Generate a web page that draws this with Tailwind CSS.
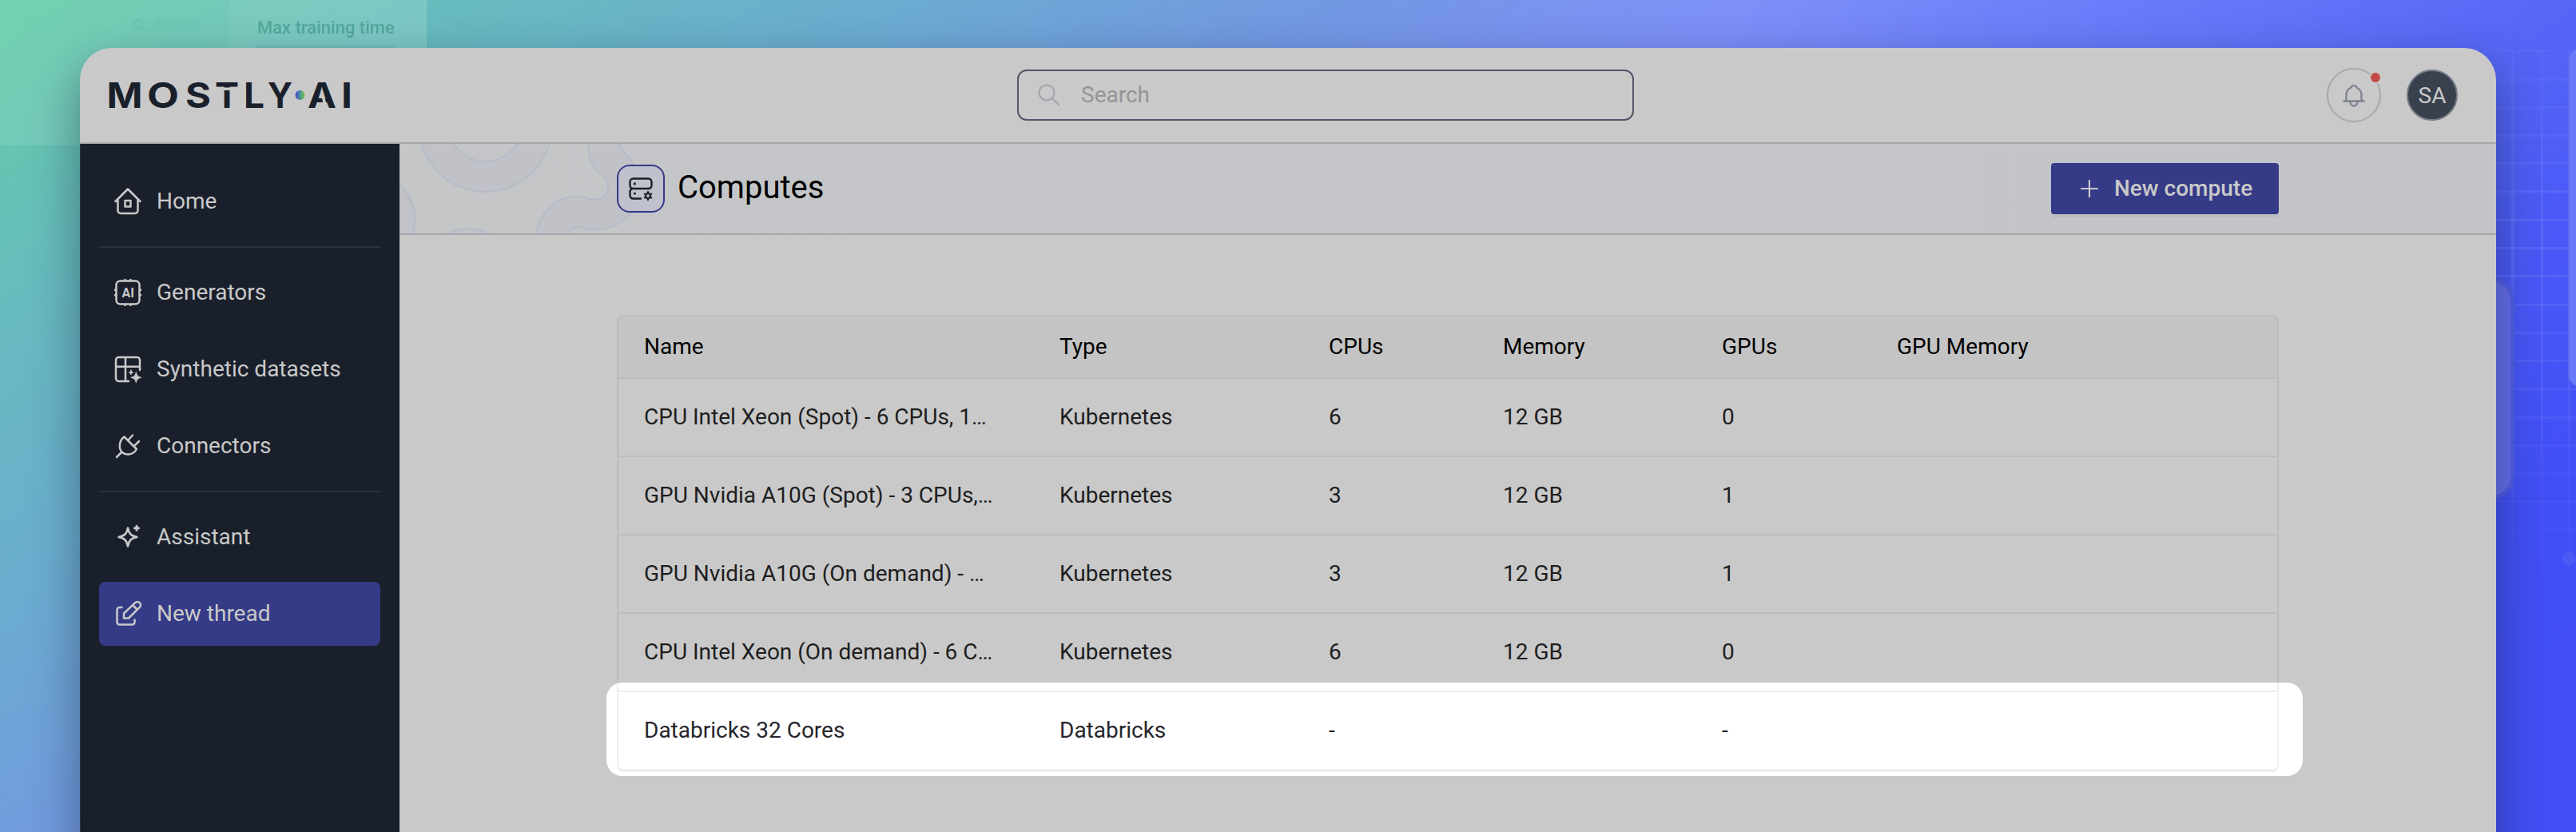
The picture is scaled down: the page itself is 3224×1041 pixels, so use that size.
<!DOCTYPE html>
<html lang="en">
<head>
<meta charset="utf-8">
<title>Computes</title>
<script src="https://cdn.jsdelivr.net/npm/@tailwindcss/browser@4"></script>
</head>
<body class="overflow-hidden">
<div class="relative isolate h-[1041px] w-[3224px] overflow-hidden bg-[linear-gradient(145.7deg,#64cda5_0px,#67bcbd_304px,#6bacd0_630px,#7298e2_940px,#7e8ff8_1240px,#6b7df9_1475px,#5566f6_1830px,#4b5af7_2020px,#414ff6_2297px,#434ff6_2675px)] pt-[60px] pl-[100px] font-[Roboto,sans-serif] text-[28px] leading-[33px] text-[#1e1e20]">

  <!-- Backdrop decoration -->
  <div class="absolute top-0 left-0 -z-10 h-[182px] w-[534px] bg-[#b0e8d8]/20"></div>
  <div class="absolute top-0 left-[287px] -z-10 h-[182px] w-[247px] rounded-t border-x-2 border-[#7ccbc0]/60 bg-white/5"></div>
  <div class="absolute top-[22px] left-[30px] -z-10 h-[14px] w-[50px] rounded bg-[#68cfb0]/20 blur-[2px]"></div>
  <div class="absolute top-[22px] left-[194px] -z-10 h-[14px] w-[58px] rounded bg-[#5fc4ae]/30 blur-[2px]"></div>
  <svg class="absolute top-[21px] left-[166px] -z-10" width="18" height="17" fill="none" stroke="#66c4ae" stroke-width="1.5"><path d="M2 15V3M2 8l6-5 7 6M4 15h12M6 11v2M11 10v4"/></svg>
  <div class="absolute top-[22px] left-[322px] -z-10 text-[22px] leading-[26px] font-medium whitespace-nowrap text-[#53a99c] blur-[0.6px]">Max training time</div>
  <div class="absolute top-[57px] left-[322px] -z-10 h-2 w-[173px] bg-[#5eb2a6]/40 blur-[1px]"></div>

  <svg class="absolute top-0 left-[3110px] -z-10" width="114" height="1041" fill="none">
    <defs>
      <linearGradient id="fade" x1="0" y1="0" x2="0" y2="760" gradientUnits="userSpaceOnUse">
        <stop offset="0.08" stop-color="#7c8cff" stop-opacity="0.1"/>
        <stop offset="0.4" stop-color="#7c8cff" stop-opacity="0.27"/>
        <stop offset="1" stop-color="#7c8cff" stop-opacity="0"/>
      </linearGradient>
    </defs>
    <g fill="url(#fade)">
      <path d="M33 63h4v690h-4zM70 63h3v690h-3zM104 63h3v690h-3z"/>
      <path d="M0 62h114v3H0zM0 98h114v3H0zM0 133h114v3H0zM0 168h114v3H0zM0 203h114v3H0zM0 238h114v3H0zM0 274h114v3H0zM0 309h114v3H0zM0 344h114v3H0zM0 380h114v3H0zM0 415h114v3H0zM0 450h114v3H0zM0 485h114v3H0zM0 521h114v3H0zM0 556h114v3H0zM0 591h114v3H0zM0 626h114v3H0zM0 662h114v3H0zM0 698h114v3H0z"/>
    </g>
    <circle cx="105" cy="699" r="8" fill="#4d5bf6"/>
    <rect x="105" y="61" width="60" height="422" rx="14" fill="#6b79f9" stroke="#5f6df0" stroke-width="2"/>
    <rect x="-60" y="348" width="95" height="276" rx="30" fill="#666fee" stroke="#505de6" stroke-width="5"/>
  </svg>

  <!-- Application window -->
  <div class="flex h-[1100px] w-[3024px] flex-col rounded-[40px] bg-[#c9c9c9] shadow-[0_24px_60px_rgba(20,30,50,0.45)]">

    <header class="flex h-[120px] shrink-0 items-center border-b-2 border-[#a4a8ad] pr-12 pl-9">
      <svg width="302" height="40" viewBox="0 0 302 40" class="overflow-visible font-[Inter,sans-serif] text-[44px] font-bold">
        <defs>
          <linearGradient id="dot" x1="0" x2="1" y1="0" y2="0"><stop offset="0.1" stop-color="#4a50c8"/><stop offset="0.55" stop-color="#4a9c96"/><stop offset="1" stop-color="#84c044"/></linearGradient>
        </defs>
        <g fill="#1a202b">
          <text x="-2.500" y="36" textLength="45" lengthAdjust="spacingAndGlyphs">M</text>
          <text x="48" y="36" textLength="40" lengthAdjust="spacingAndGlyphs">O</text>
          <text x="96" y="36" textLength="32" lengthAdjust="spacingAndGlyphs">S</text>
          <text x="133" y="36" textLength="30" lengthAdjust="spacingAndGlyphs">T</text>
          <text x="169" y="36" textLength="26" lengthAdjust="spacingAndGlyphs">L</text>
          <text x="199" y="36" textLength="31" lengthAdjust="spacingAndGlyphs">Y</text>
          <text x="249" y="36" textLength="36" lengthAdjust="spacingAndGlyphs">A</text>
          <text x="291" y="36" textLength="14" lengthAdjust="spacingAndGlyphs">I</text>
        </g>
        <path d="M133 10.500h30v3.500h-30zM267 24l3.500 0 2 6.500-4 0z" fill="#c9c9c9"/>
        <circle cx="239.500" cy="20" r="6" fill="url(#dot)"/>
      </svg>
      <div class="ml-[835px] flex h-16 w-[772px] items-center rounded-xl border-2 border-[#51566a] pl-[23px] text-[#959595]">
        <svg width="30" height="30" viewBox="0 0 30 30" fill="none" stroke="#a1a6ae" stroke-width="2.200" stroke-linecap="round"><circle cx="12" cy="12" r="9.500"/><path d="M19 19l8 8"/></svg>
        <span class="ml-[25px] pb-0.5">Search</span>
      </div>
      <div class="ml-auto flex items-center gap-8">
        <div class="relative flex size-[68px] items-center justify-center rounded-full border-2 border-[#a4a8b0]">
          <svg width="32" height="32" viewBox="0 0 32 32" fill="none" stroke="#7f8491" stroke-width="2.400" stroke-linejoin="round" stroke-linecap="round"><path d="M3.500 23.500h25M6.500 23V15.500c0-4.500 2.500-7 5.500-8.500a4.200 4.200 0 0 1 8 0c3 1.500 5.500 4 5.500 8.500V23l2.500 .500M6.500 23L4 23.500M11.500 24.500a4.500 5 0 0 0 9 0"/></svg>
          <span class="absolute top-[2px] right-[-3px] size-4 rounded-full border-2 border-[#c9c9c9] bg-[#c04b46]"></span>
        </div>
        <div class="flex size-16 items-center justify-center rounded-full border-2 border-[#747a86] bg-[#39404e] text-[#c9c9c9]">SA</div>
      </div>
    </header>

    <div class="flex grow">
      <aside class="w-[400px] shrink-0 border-l border-[#2d3642] bg-[#1a202b] pt-8 pr-6 pl-[23px] text-[#c9c9c9]">
        <nav class="flex flex-col gap-4">
          <div class="flex h-20 items-center gap-4 px-4">
            <svg width="40" height="40" viewBox="0 0 40 40" fill="none" stroke="currentColor" stroke-width="2.500" stroke-linecap="round" stroke-linejoin="round"><path d="M4.500 20L20 4.500 35.500 20M7.500 18v13.500a3.500 3.500 0 0 0 3.500 3.500h18a3.500 3.500 0 0 0 3.500-3.500V18M16.500 19h7v7.500h-7z"/></svg>
            <span class="pb-0.5">Home</span>
          </div>
          <div class="h-0.5 bg-[#2c3242]"></div>
          <div class="flex h-20 items-center gap-4 px-4">
            <svg width="40" height="40" viewBox="0 0 40 40" fill="none" stroke="currentColor" stroke-width="2.500" stroke-linecap="round"><rect x="5.500" y="5.500" width="29" height="29" rx="5"/><path d="M16.500 4v1M23.500 4v1M16.500 35v1M23.500 35v1M4 16.700h1M4 23.300h1M35 16.700h1M35 23.300h1"/><text x="20.200" y="25.700" font-size="16" font-weight="700" text-anchor="middle" fill="currentColor" stroke="none">AI</text></svg>
            <span class="pb-0.5">Generators</span>
          </div>
          <div class="flex h-20 items-center gap-4 px-4">
            <svg width="40" height="40" viewBox="0 0 40 40" fill="none" stroke="currentColor" stroke-width="2.500" stroke-linecap="round"><path d="M35 21V8.500A3.500 3.500 0 0 0 31.500 5h-23A3.500 3.500 0 0 0 5 8.500v23A3.500 3.500 0 0 0 8.500 35H21M17 5v30M5 16.800h30"/><path d="M30.300 23.800c1 4 2.500 5.500 6.500 6.500-4 1-5.500 2.500-6.500 6.500-1-4-2.500-5.500-6.500-6.500 4-1 5.500-2.500 6.500-6.500zM24 21c.500 2 1 2.500 3 3-2 .500-2.500 1-3 3-.500-2-1-2.500-3-3 2-.500 2.500-1 3-3z" fill="currentColor" stroke="currentColor" stroke-width="0.800"/></svg>
            <span class="pb-0.5">Synthetic datasets</span>
          </div>
          <div class="flex h-20 items-center gap-4 px-4">
            <svg width="40" height="40" viewBox="0 0 40 40" fill="none" stroke="currentColor" stroke-width="2.500" stroke-linecap="round" stroke-linejoin="round"><path d="M15.500 8.500L31 24c-4 7-13 8.500-18 4S9 13 15.500 8.500zM20.500 12.500L26 6.500M28 20l6-6M12.500 27.500l-6.500 6.500"/></svg>
            <span class="pb-0.5">Connectors</span>
          </div>
          <div class="h-0.5 bg-[#2c3242]"></div>
          <div class="flex h-20 items-center gap-4 px-4">
            <svg width="40" height="40" viewBox="0 0 40 40" fill="none" stroke="currentColor" stroke-width="2.500" stroke-linejoin="round"><path d="M20 8.500c1.500 7.500 4 10 11.500 11.500C24 21.500 21.500 24 20 31.500 18.500 24 16 21.500 8.500 20 16 18.500 18.500 16 20 8.500z"/><path d="M31 6.200v5M28.500 8.700h5" stroke-width="3" stroke-linecap="round"/></svg>
            <span class="pb-0.5">Assistant</span>
          </div>
          <div class="flex h-20 items-center gap-4 rounded-lg bg-[#353b87] px-4">
            <svg width="40" height="40" viewBox="0 0 40 40" fill="none" stroke="currentColor" stroke-width="2.500" stroke-linecap="round" stroke-linejoin="round"><path d="M12.500 12H9.500A3 3 0 0 0 6.500 15v15.500a3 3 0 0 0 3 3H25.500a3 3 0 0 0 3-3V27.500M15 25.500v-6L29.200 6.200a3.900 3.900 0 0 1 5.600 5.600L21 25.500zM26.500 9.500l5 5"/></svg>
            <span class="pb-0.5">New thread</span>
          </div>
        </nav>
      </aside>

      <main class="flex w-[2624px] flex-col">
        <div class="relative flex h-[114px] items-center justify-between border-b-2 border-[#a4a7ac] bg-linear-to-r from-[#c4c6c8] to-[#c2c4c8] pr-[272px] pl-[272px]">
          <svg class="absolute top-0 left-0" width="340" height="112" viewBox="500 180 340 112" fill="#c1c2c7" stroke="#b7bac9" stroke-width="2">
            <circle cx="607.500" cy="157" r="83"/>
            <circle cx="607.500" cy="155.500" r="46.500" fill="#c4c5c8"/>
            <path d="M490 222C512 238 526 262 516 296L490 300z"/>
            <path d="M556 294C574 284 598 283 615 294"/>
            <path d="M736 176C736 200 742 210 749 215C758 222 762 228 761 236C758 248 750 251 739 249C728 246 724 245 716 246C696 249 673 266 671 296H709C713 286 719 282 727 285C748 290 774 287 790 266L805 235C805 225 797 210 792 204C787 195 777 190 775 176z"/>
          </svg>
          <div class="relative flex items-center gap-4">
            <div class="size-[60px] rounded-2xl border-2 border-[#353b87] bg-[#bfc1cc]">
              <svg width="56" height="56" viewBox="774 208 56 56" fill="none" stroke="#1e1e22" stroke-width="2.400" stroke-linecap="round"><rect x="788.500" y="223.500" width="27" height="12.500" rx="4"/><path d="M791 236.200c-1.500.500-2.500 2-2.500 3.800v4.500a4 4 0 0 0 4 4H802"/><path d="M811 240.500l1.200 2 2.600.200-1.300 2.300 1.300 2.300-2.600.200-1.200 2-1.200-2-2.600-.200 1.300-2.300-1.300-2.300 2.600-.200z" stroke-width="2.200"/><path d="M794.400 229.800v.1M794.400 242v.1" stroke-width="3"/></svg>
            </div>
            <h1 class="pb-0.5 text-[40px] leading-[48px] text-black">Computes</h1>
          </div>
          <div class="relative flex h-16 w-[285px] items-center rounded bg-[#353b87] pl-[37px] font-medium text-[#c9c9c9] shadow-[0_4px_0_#bbbcbe]">
            <svg width="22" height="22" viewBox="0 0 22 22" fill="none" stroke="currentColor" stroke-width="2.200" stroke-linecap="round"><path d="M11 1v20M1 11h20"/></svg>
            <span class="ml-[20px] pb-0.5">New compute</span>
          </div>
        </div>

        <div class="mt-[100px] ml-[272px] w-[2080px]">
          <div class="grid h-20 grid-cols-[520px_337px_218px_274px_219px_1fr] items-center rounded-t-lg border-2 border-[#bdbdbd] bg-[#c4c4c4] pb-0.5 pl-8 text-black">
            <span>Name</span><span>Type</span><span>CPUs</span><span>Memory</span><span>GPUs</span><span>GPU Memory</span>
          </div>
          <div class="grid h-[98px] grid-cols-[520px_337px_218px_274px_219px_1fr] items-center border-x-2 border-b-2 border-[#bdbdbd] pb-0.5 pl-8">
            <span>CPU Intel Xeon (Spot) - 6 CPUs, 1…</span><span>Kubernetes</span><span>6</span><span>12 GB</span><span>0</span>
          </div>
          <div class="grid h-[98px] grid-cols-[520px_337px_218px_274px_219px_1fr] items-center border-x-2 border-b-2 border-[#bdbdbd] pb-0.5 pl-8">
            <span>GPU Nvidia A10G (Spot) - 3 CPUs,…</span><span>Kubernetes</span><span>3</span><span>12 GB</span><span>1</span>
          </div>
          <div class="grid h-[98px] grid-cols-[520px_337px_218px_274px_219px_1fr] items-center border-x-2 border-b-2 border-[#bdbdbd] pb-0.5 pl-8">
            <span>GPU Nvidia A10G (On demand) - …</span><span>Kubernetes</span><span>3</span><span>12 GB</span><span>1</span>
          </div>
          <div class="grid h-24 grid-cols-[520px_337px_218px_274px_219px_1fr] items-center border-x-2 border-[#bdbdbd] pb-0.5 pl-8">
            <span>CPU Intel Xeon (On demand) - 6 C…</span><span>Kubernetes</span><span>6</span><span>12 GB</span><span>0</span>
          </div>
          <div class="relative">
            <!-- Spotlight around the highlighted row -->
            <div class="absolute -top-[10px] -right-[30px] -bottom-[5px] -left-[13px] rounded-[20px] bg-white"></div>
            <div class="absolute inset-x-0 -top-[10px] h-[10px] border-x-2 border-[#efefef]"></div>
            <div class="relative grid h-[102px] grid-cols-[520px_337px_218px_274px_219px_1fr] items-center rounded-b-lg border-2 border-b-4 border-[#efefef] pb-0.5 pl-8 text-[#26262a]">
              <span>Databricks 32 Cores</span><span>Databricks</span><span>-</span><span></span><span>-</span>
            </div>
          </div>
        </div>
      </main>
    </div>
  </div>
</div>
</body>
</html>
